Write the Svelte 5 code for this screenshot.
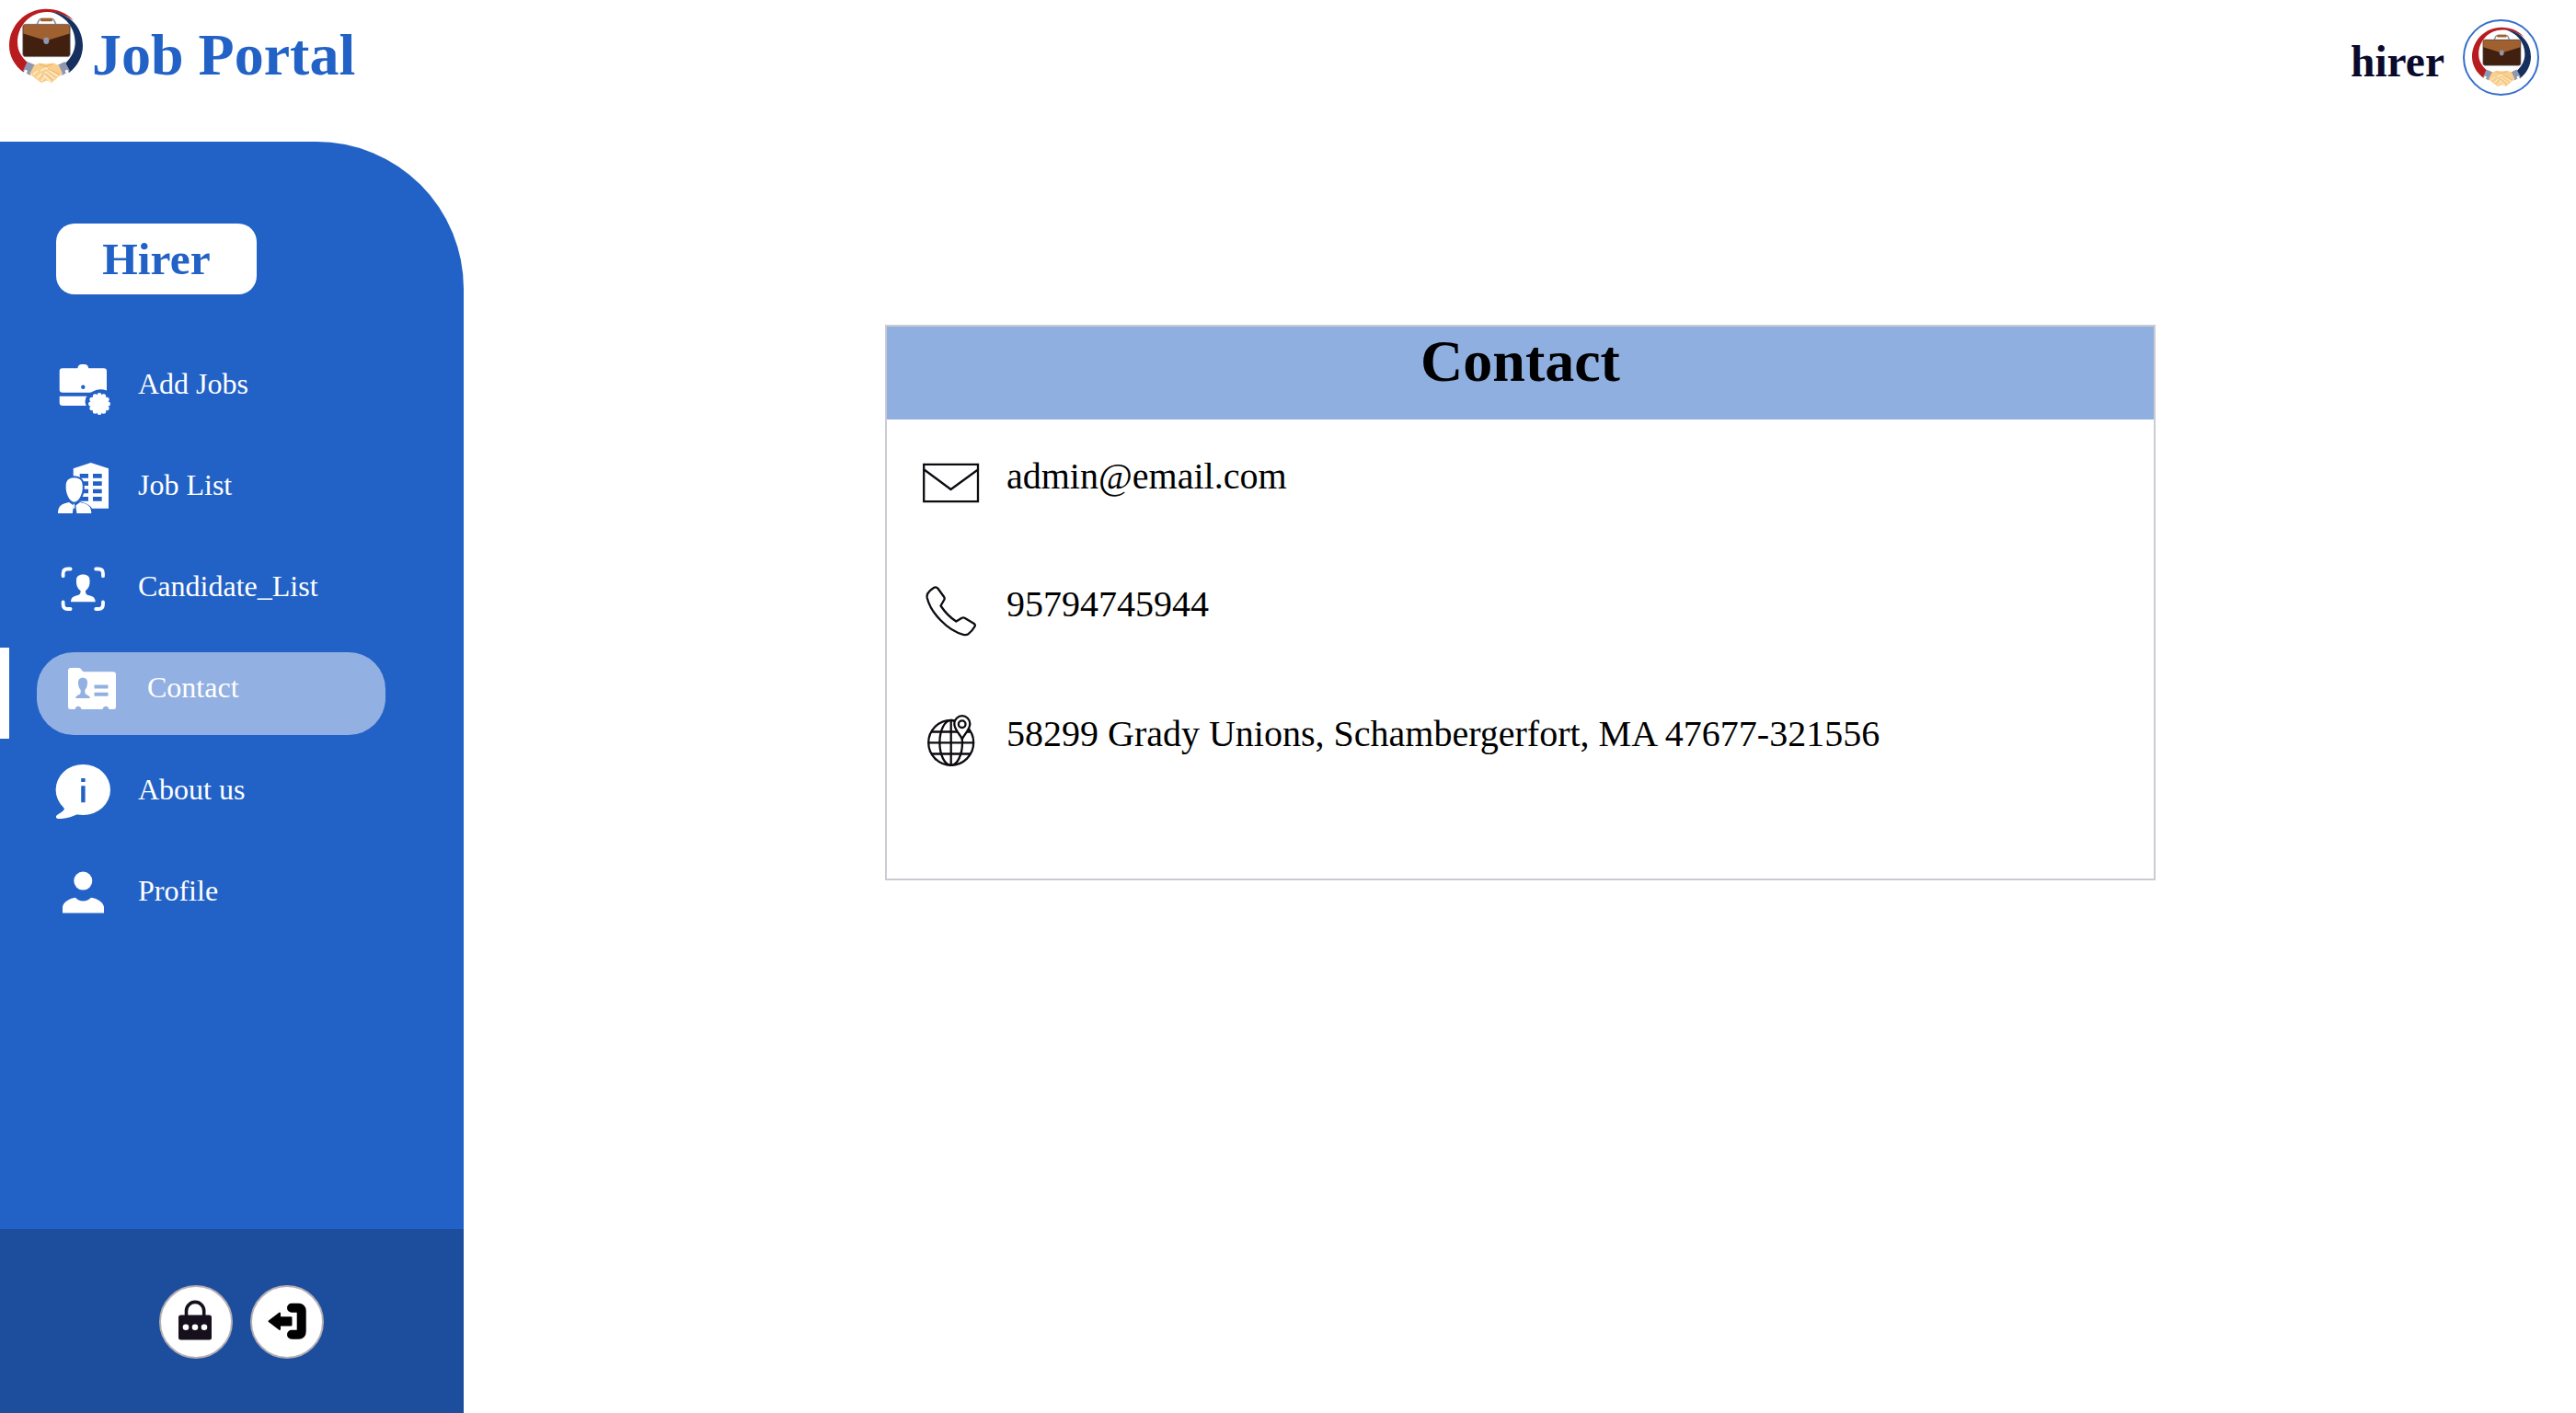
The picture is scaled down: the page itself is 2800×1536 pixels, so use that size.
<script>
  const nav = [
    { label: 'Add Jobs', icon: 'add' },
    { label: 'Job List', icon: 'list' },
    { label: 'Candidate_List', icon: 'candidate' },
    { label: 'Contact', icon: 'contact', active: true },
    { label: 'About us', icon: 'about' },
    { label: 'Profile', icon: 'profile' }
  ];
  const contacts = [
    { icon: 'mail', text: 'admin@email.com' },
    { icon: 'phone', text: '95794745944' },
    { icon: 'globe', text: '58299 Grady Unions, Schambergerfort, MA 47677-321556' }
  ];
  // outline of the scalloped badge on the "Add Jobs" icon
  const badge = Array.from({ length: 12 }, (_, i) => {
    const a = (i * Math.PI) / 6;
    return { x: 50 + 9.4 * Math.cos(a), y: 46 + 9.4 * Math.sin(a) };
  });
</script>

{#snippet logo()}
  <svg class="logo" viewBox="0 0 100 100">
    <path fill="#b91c1f" d="M25.5 78.5 C16 71.500 10 61 10 49.700 C10 27.500 28 9.700 50 9.700 C62 9.700 73 14 80 22.500 C71 16 61 12.800 51 13 C33 13 19 28 19 46 C19 55 23 62 31 69 Z" />
    <path fill="#15305f" d="M75 79 C84.500 72 90 61 90 49.700 C90 30 76 14.500 55 12.700 C70 17 81.700 29 81.700 46 C81.700 55 78 62 70 70 Z" />
    <path fill="#8f98ae" d="M29.500 67 L38 70.500 L32.500 82 L25 77 Z M70.500 67 L63 70.500 L67.500 82 L76 77 Z" />
    <circle cx="28" cy="77.500" r="1.700" fill="#fff" />
    <circle cx="72.500" cy="77.500" r="1.700" fill="#fff" />
    <path fill="#f8cf8e" d="M37 71 L43 68.500 L50 69.500 L58 68.500 L64 71 L68 80 L63 84 L56 90 L51 87.500 L45 90 L38 85 L32.500 80 Z" />
    <path fill="none" stroke="#fff3df" stroke-width="1.200" d="M36 81 L41 77 M40 85 L45 80 M45 88 L49 83 M50 74 L63 83 M49 78 L59 86 M48 82 L55 89 M50 74 L44 77" />
    <path fill="none" stroke="#e9a651" stroke-width=".7" d="M43 70 L50 72 L57 70 M52 75 L65 81 M50 80 L58 87" />
    <path fill="none" stroke="#8890a2" stroke-width="1.700" d="M40 27 L42.300 22 Q43 20.500 45 20.500 H56 Q58 20.500 58.700 22 L61 27" />
    <rect x="44" y="19.700" width="13" height="3.500" rx="1" fill="#a3622c" />
    <rect x="24.700" y="26.300" width="51.600" height="35.400" rx="3" fill="#42200f" stroke="#8890a2" stroke-width=".7" />
    <path fill="#a0602f" d="M25.300 36.500 V29.500 Q25.300 26.800 28 26.800 H73 Q75.700 26.800 75.700 29.500 V36.500 L50.500 44.300 Z" />
    <ellipse cx="50.300" cy="44.300" rx="3" ry="3.700" fill="#8f98ae" />
  </svg>
{/snippet}

{#snippet icon(name)}
  <svg class="icon" viewBox="0 0 64 64">
    {#if name === 'add'}
      <path fill="#fff" d="M10 7.300 H26.300 Q27 3 31 3 H33.600 Q37.600 3 38.300 7.300 H54.700 Q58 7.300 58 10.500 V31.500 Q50 28.500 43 32.500 Q41 33.700 39 33.700 H10 Q6.700 33.700 6.700 30.500 V10.500 Q6.700 7.300 10 7.300 Z" />
      <circle class="cut" cx="32.300" cy="27.700" r="2.200" />
      <path fill="#fff" d="M6.700 37.700 H36.500 Q34.500 40 35 41.500 Q33.800 43.500 35.700 48 H10 Q6.700 48 6.700 44.700 Z" />
      <circle fill="#fff" cx="50" cy="46" r="10" />
      {#each badge as b}<circle fill="#fff" cx={b.x} cy={b.y} r="2.500" />{/each}
    {:else if name === 'list'}
      <path fill="#fff" d="M21.700 6.300 L40.700 0 L60 6.300 V49.700 H21.700 Z" />
      <path class="cut" d="M28.700 12 H38 V16.700 H28.700 Z M43 12 H52.700 V16.700 H43 Z M28.700 20.300 H38 V25 H28.700 Z M43 20.300 H52.700 V25 H43 Z M28.700 28.700 H38 V33.300 H28.700 Z M43 28.700 H52.700 V33.300 H43 Z M28.700 37 H38 V41.700 H28.700 Z M43 37 H52.700 V41.700 H43 Z" />
      <path class="gap" d="M22.700 16.300 C28 16.300 31.700 19 31.700 25 C32.500 33 28 42.700 22.700 42.700 C17.500 42.700 13 33 13.700 25 C13.700 19 17.500 16.300 22.700 16.300 Z" />
      <path class="gap" d="M25 43.500 Q41.300 46 41.300 55 H25.300 Z" />
      <path fill="#fff" d="M22.700 16.300 C28 16.300 31.700 19 31.700 25 C32.500 33 28 42.700 22.700 42.700 C17.500 42.700 13 33 13.700 25 C13.700 19 17.500 16.300 22.700 16.300 Z M17 43 L22 46.500 L20.800 55 H5 C5 47.500 8.500 44.500 17 43 Z M29 43 L24.300 46.500 L25.400 55 H41.300 C41.300 47.500 37.500 44.500 29 43 Z" />
    {:else if name === 'candidate'}
      <path fill="none" stroke="#fff" stroke-width="3.800" stroke-linecap="round" d="M10.600 13.200 V10.500 Q10.600 5.500 15.600 5.500 H18.600 M46.200 5.500 H49 Q54 5.500 54 10.500 V13.200 M54 41.500 V44 Q54 49 49 49 H46.200 M18.600 49 H15.600 Q10.600 49 10.600 44 V41.500" />
      <path fill="#fff" d="M32.300 11.600 C37 11.600 39.700 14 39.500 18 C40 23 38 27 35 29 C35 33 36 33.500 39 34.300 C43.500 35.500 45.500 37 45.700 41.300 H19 C19.200 37 21.200 35.500 25.700 34.300 C28.600 33.500 29.600 33 29.600 29 C26.500 27 24.700 23 25 18 C24.800 14 27.600 11.600 32.300 11.600 Z" />
    {:else if name === 'contact'}
      <path fill="#fff" d="M9 2 H17.500 C21 2 20.500 6.300 24 6.300 H55 Q58 6.300 58 9.300 V44.500 Q58 47 55 47 H50.500 C49.500 42.600 44.500 42.600 43.500 47 H20.500 C19.500 42.600 14.500 42.600 13.500 47 H9 Q6 47 6 44.500 V5 Q6 2 9 2 Z" />
      <path class="pale" d="M22 12.700 C25.500 12.700 27.300 15 27 18.500 C27 22 26 24 24.300 26 C24.300 30 24.800 30.800 27 31.500 Q29.800 32.500 30 35 H14 Q14.200 32.500 17 31.500 C19.500 30.800 19.700 30 19.700 26 C18 24 17 22 17 18.500 C16.700 15 18.500 12.700 22 12.700 Z M34.500 20.500 H49.500 V24.500 H34.500 Z M34.500 28.800 H49.500 V32.800 H34.500 Z" />
    {:else if name === 'about'}
      <ellipse fill="#fff" cx="32.300" cy="24.500" rx="29.700" ry="27.500" />
      <path fill="#fff" d="M10 41 L12 45.500 C10 49 4 51 2.900 53.500 C2.500 56 5 56.300 9 56 C16 55.500 21 53 26 51.200 Z" />
      <path class="cut" d="M30.200 12 H34.600 V16 H30.200 Z M30.200 20.300 H34.600 V38.300 H30.200 Z" />
    {:else}
      <circle fill="#fff" cx="32.300" cy="13.600" r="10" />
      <path fill="#fff" d="M10 48.600 V42.500 C10 37.500 17 32.500 24 31.800 C27.500 36.700 37 36.700 41 31.800 C48 32.500 55 37.500 55 42.500 V48.600 Z" />
    {/if}
  </svg>
{/snippet}

{#snippet lineIcon(name)}
  <svg class="line-icon" viewBox="0 0 64 64">
    {#if name === 'mail'}
      <path d="M2.200 10.800 H61 V51.200 H2.200 Z M2.500 16.500 L31.500 38 L61 16.500" />
    {:else if name === 'phone'}
      <path stroke-linejoin="round" d="M12.500 6.300 Q15.500 4.300 17.500 6.800 L24.200 16 Q25 17.500 24.300 19 L20.500 25.500 C24.500 31.500 31 38.500 37.300 42.500 L43.500 38.700 Q45 38 46.500 38.700 L56.500 44.700 Q58.500 46 57.500 48 C55.500 51.500 53 54.300 50.500 56.200 Q48.500 57.500 45 56.800 C28 52.500 9.500 33 5.800 17 Q5.200 14 6.500 12 Q9 8.500 12.500 6.300 Z" />
    {:else}
      <circle cx="31.700" cy="33.300" r="24.500" />
      <ellipse cx="31.700" cy="33.300" rx="12.300" ry="24.500" />
      <path d="M31.700 9 V58 M7 33.300 H56.500 M10.500 21.500 H53 M10.500 45.500 H53" />
      <path class="pin" d="M43.800 29.500 C42 24.500 35.300 19.500 35.300 12.700 A8.500 8.500 0 0 1 52.300 12.700 C52.300 19.500 45.600 24.500 43.800 29.500 Z" />
      <circle cx="43.700" cy="13.200" r="3.800" />
    {/if}
  </svg>
{/snippet}

<div class="page">
  <header>
    <div class="brand">
      {@render logo()}
      <h1>Job Portal</h1>
    </div>
    <div class="user">
      <span>hirer</span>
      <div class="avatar">{@render logo()}</div>
    </div>
  </header>
  <div class="body">
    <aside>
      <div class="role">Hirer</div>
      <nav>
        {#each nav as item}
          <a class="item" class:active={item.active}>
            <span class="inner">
              {@render icon(item.icon)}
              <span>{item.label}</span>
            </span>
          </a>
        {/each}
      </nav>
      <footer>
        <button aria-label="Change password">
          <svg viewBox="0 0 80 80">
            <path fill="none" stroke="#15101c" stroke-width="3.600" d="M29.500 34 V28 A9.600 9.600 0 0 1 48.700 28 V34" />
            <rect x="21" y="32.500" width="36" height="27" rx="2.500" fill="#15101c" />
            <circle cx="29" cy="45.800" r="3.300" fill="#fff" />
            <circle cx="39" cy="45.800" r="3.300" fill="#fff" />
            <circle cx="49" cy="45.800" r="3.300" fill="#fff" />
          </svg>
        </button>
        <button aria-label="Log out">
          <svg viewBox="0 0 80 80">
            <path fill="none" stroke="#000" stroke-width="10" stroke-linecap="round" d="M45 24.800 H52.500 Q55.700 24.800 55.700 28 V50.500 Q55.700 53.800 52.500 53.800 H45" />
            <path fill="#000" stroke="#000" stroke-width="2" stroke-linejoin="round" d="M20.500 39.300 L32 30.500 V35.300 H44.500 V43.500 H32 V48 Z" />
          </svg>
        </button>
      </footer>
    </aside>
    <main>
      <section class="card">
        <h2>Contact</h2>
        <div class="rows">
          {#each contacts as c}
            <div class="row">
              {@render lineIcon(c.icon)}
              <span>{c.text}</span>
            </div>
          {/each}
        </div>
      </section>
    </main>
  </div>
</div>

<style>
  :global(body) {
    margin: 0;
    background: #fff;
  }
  .page {
    width: 2800px;
    height: 1536px;
    display: flex;
    flex-direction: column;
    overflow: hidden;
    font-family: 'Liberation Serif', 'Times New Roman', serif;
    color: #000;
  }
  svg {
    display: block;
    flex: none;
    overflow: visible;
  }
  header {
    height: 154px;
    flex: none;
    display: flex;
    justify-content: space-between;
    align-items: flex-start;
  }
  .brand {
    display: flex;
  }
  .brand .logo {
    width: 100px;
    height: 100px;
  }
  h1 {
    margin: 0;
    line-height: 119px;
    font-size: 64px;
    color: #2262c6;
  }
  .user {
    display: flex;
    gap: 20px;
    padding: 20.500px 40px 0 0;
    font-size: 47.500px;
    font-weight: bold;
    line-height: 92px;
    color: #0a0a2c;
  }
  .avatar {
    box-sizing: border-box;
    width: 83px;
    height: 83px;
    border: 2px solid #3570cc;
    border-radius: 50%;
    display: flex;
    align-items: center;
    justify-content: center;
  }
  .avatar .logo {
    width: 80px;
    height: 80px;
  }
  .body {
    flex: 1;
    display: flex;
  }
  aside {
    width: 504px;
    flex: none;
    display: flex;
    flex-direction: column;
    background: #2262c6;
    border-top-right-radius: 160px;
    overflow: hidden;
  }
  .role {
    width: 218px;
    height: 77px;
    margin: 89px 0 0 61px;
    border-radius: 20px;
    background: #fff;
    color: #2262c6;
    font-size: 49.500px;
    font-weight: bold;
    line-height: 77px;
    text-align: center;
  }
  nav {
    margin-top: 41px;
    flex: 1;
  }
  .item {
    display: flex;
    height: 110.200px;
    padding-left: 58px;
    color: #fff;
    font-size: 32px;
    line-height: 112px;
  }
  .inner {
    display: flex;
    gap: 28px;
  }
  .icon {
    width: 64px;
    height: 64px;
    margin-top: 32px;
  }
  .cut {
    fill: #2262c6;
  }
  .gap {
    fill: #2262c6;
    stroke: #2262c6;
    stroke-width: 4;
  }
  .pale {
    fill: #92b0e2;
  }
  .item.active {
    box-sizing: border-box;
    padding: 12px 0 0;
  }
  .item.active::before {
    content: '';
    width: 10px;
    height: 99px;
    background: #fff;
  }
  .item.active .inner {
    box-sizing: border-box;
    width: 379px;
    height: 90px;
    margin: 5px 0 0 30px;
    padding-left: 28px;
    border-radius: 40px;
    background: #92b0e2;
    line-height: 76px;
  }
  .active .icon {
    margin-top: 15px;
  }
  footer {
    box-sizing: border-box;
    height: 200px;
    padding: 61px 0 0 173px;
    display: flex;
    gap: 19px;
    background: #1d4e9e;
  }
  button {
    box-sizing: border-box;
    width: 80px;
    height: 80px;
    padding: 0;
    border: 2px solid #b5aeb2;
    border-radius: 50%;
    background: #fff;
    display: flex;
    align-items: center;
    justify-content: center;
  }
  button svg {
    width: 80px;
    height: 80px;
  }
  main {
    flex: 1;
    padding: 199px 0 0 458px;
  }
  .card {
    box-sizing: border-box;
    width: 1381px;
    height: 604px;
    border: 2px solid #cbccd3;
  }
  h2 {
    margin: 0;
    height: 101px;
    background: #8fafe0;
    font-size: 64px;
    line-height: 76px;
    text-align: center;
  }
  .rows {
    padding: 30px 38px;
  }
  .row {
    height: 139px;
    display: flex;
    gap: 28px;
    font-size: 40px;
    line-height: 64px;
  }
  .row:nth-child(2) {
    height: 141px;
  }
  .line-icon {
    width: 64px;
    height: 64px;
    margin-top: 8px;
    fill: none;
    stroke: #0d0a10;
    stroke-width: 2.300;
  }
  .pin {
    fill: #fff;
  }
</style>
